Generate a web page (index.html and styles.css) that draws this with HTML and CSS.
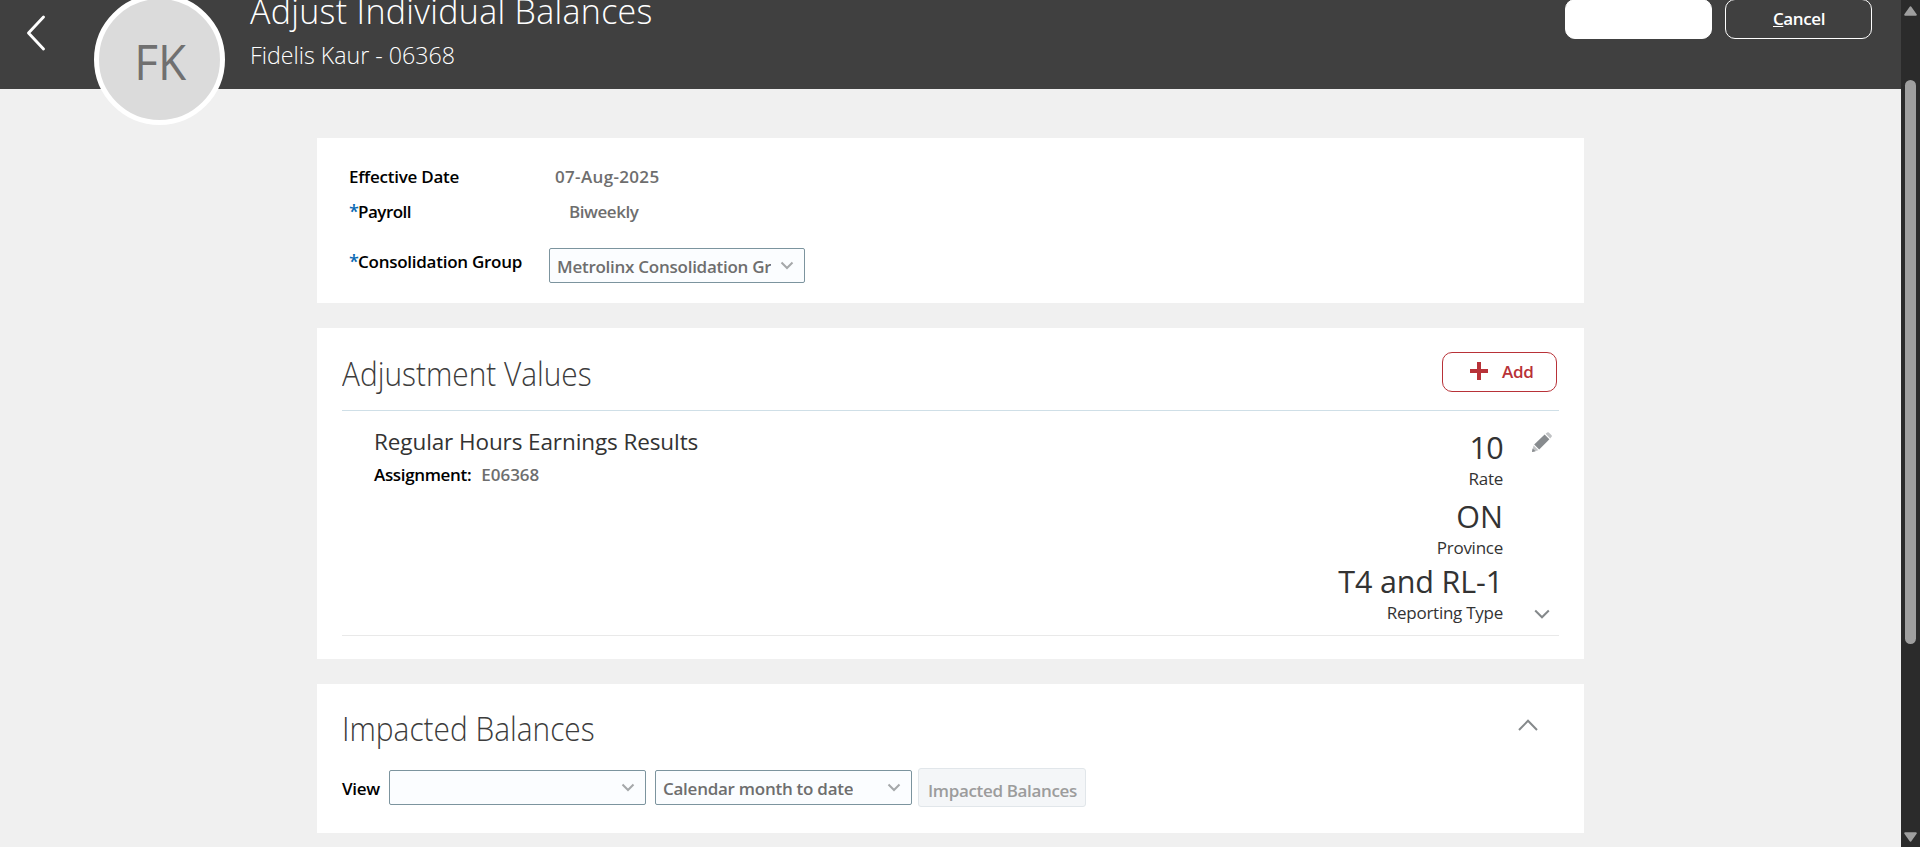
FILE: index.html
```html
<!DOCTYPE html>
<html lang="en">
<head>
<meta charset="utf-8">
<title>Adjust Individual Balances</title>
<link rel="stylesheet" href="styles.css">
</head>
<body>
<div class="page">
  <main class="content">
    <header class="header">
      <svg class="back" width="20" height="38" viewBox="0 0 20 38"><path d="M17.5 3 L2.5 19 L17.5 35"/></svg>
      <div class="avatar"><span class="initials">FK</span></div>
      <div class="heading">
        <h1 class="title">Adjust Individual Balances</h1>
        <p class="subtitle">Fidelis Kaur - 06368</p>
      </div>
      <div class="actions">
        <button class="action action-primary"></button>
        <button class="action"><span><u>C</u>ancel</span></button>
      </div>
    </header>

    <section class="card details">
      <div class="row row-date"><span class="label"><b>Effective Date</b></span><span class="value v-date"><b>07-Aug-2025</b></span></div>
      <div class="row row-payroll"><span class="label"><i class="req">*</i><b class="t-payroll">Payroll</b></span><span class="value v-payroll"><b>Biweekly</b></span></div>
      <div class="row"><span class="label"><i class="req">*</i><b>Consolidation Group</b></span>
        <div class="select select-group"><span class="select-text">Metrolinx Consolidation Gr</span><svg class="chev" width="14" height="9" viewBox="0 0 14 9"><path d="M1.5 1.5 L7 7 L12.5 1.5"/></svg></div>
      </div>
    </section>

    <section class="card values">
      <div class="card-head">
        <h2 class="card-title">Adjustment Values</h2>
        <button class="add"><svg width="18" height="18" viewBox="0 0 18 18"><path d="M7 0h4v7h7v4h-7v7h-4v-7h-7v-4h7z"/></svg><span>Add</span></button>
      </div>
      <div class="entry">
        <div class="entry-main">
          <h3 class="entry-title">Regular Hours Earnings Results</h3>
          <p class="entry-sub"><b>Assignment:</b><span class="entry-id">E06368</span></p>
        </div>
        <div class="stats">
          <div class="stat stat-first"><span class="stat-value v-rate">10</span><span class="stat-label">Rate</span></div>
          <div class="stat"><span class="stat-value v-on">ON</span><span class="stat-label">Province</span></div>
          <div class="stat"><span class="stat-value">T4 and RL-1</span><span class="stat-label">Reporting Type</span></div>
        </div>
        <div class="tools">
          <svg width="20" height="20" viewBox="0 0 20 20"><path class="pen" d="M2.2 12.6 L12.6 2.4 L17.4 7.2 L7.2 17.5 Z"/><path class="pen-end" d="M13.6 1.8 L15.2 0.5 Q16 0 16.8 .5 L19.6 3.2 Q20.2 4 19.6 4.8 L18.2 6.4 Z M1.6 13.4 L6.4 18.2 L0 20 Z"/><path class="pen" d="M0 20 L.6 16.4 L3.6 19.3 Z"/></svg>
          <svg class="chev-lg" width="16" height="10" viewBox="0 0 16 10"><path d="M1.2 1.5 L8 8.3 L14.8 1.5"/></svg>
        </div>
      </div>
    </section>

    <section class="card impacted">
      <div class="impacted-head">
        <h2 class="card-title">Impacted Balances</h2>
        <svg class="chev-up" width="20" height="12" viewBox="0 0 20 12"><path d="M1 11 L10 1.8 L19 11"/></svg>
      </div>
      <div class="filters">
        <span class="view"><b>View</b></span>
        <div class="select"><span class="select-text"></span><svg class="chev" width="14" height="9" viewBox="0 0 14 9"><path d="M1.5 1.5 L7 7 L12.5 1.5"/></svg></div>
        <div class="select select-period"><span class="select-text">Calendar month to date</span><svg class="chev" width="14" height="9" viewBox="0 0 14 9"><path d="M1.5 1.5 L7 7 L12.5 1.5"/></svg></div>
        <button class="impact-btn">Impacted Balances</button>
      </div>
    </section>
  </main>
  <aside class="scrollbar">
    <svg width="13" height="10" viewBox="0 0 13 10"><path d="M6.5 1.2 L11.8 8.8 H1.2 Z"/></svg>
    <div class="thumb"></div>
    <svg width="13" height="10" viewBox="0 0 13 10"><path d="M6.5 8.8 L11.8 1.2 H1.2 Z"/></svg>
  </aside>
</div>
</body>
</html>
```
FILE: styles.css
```css
* { box-sizing: border-box; margin: 0; padding: 0; }
body { font-family: "Open Sans", "Noto Sans", sans-serif; font-size: 17px; line-height: 24px; letter-spacing: -0.26px; color: #333; overflow: hidden; }
b { font-weight: 600; }
button { font: inherit; letter-spacing: inherit; background: none; border: 0; }
svg { display: block; flex: none; }
span, b, h1, h2, h3, p { white-space: nowrap; }
.page { display: flex; height: 847px; background: #f0f0f0; }
.content { flex: 1; min-width: 0; }

.header { display: flex; height: 89px; background: #404040; color: #fff; padding: 0 29px 0 26px; }
.back { margin-top: 14px; fill: none; stroke: #fff; stroke-width: 2.9; stroke-linecap: round; stroke-linejoin: round; }
.avatar { display: flex; align-items: center; justify-content: center; width: 131px; height: 131px; margin: -6px 0 0 48px; border: 5px solid #fff; border-radius: 50%; background: #dbdbdb; color: #707070; font-size: 50px; letter-spacing: 0; flex: none; }
.initials { transform: scaleX(0.92); padding: 2px 0 0 1px; }
.heading { margin: -12px 0 0 25px; flex: 1; }
.title { font-size: 34px; font-weight: 300; line-height: 46px; letter-spacing: 0.3px; }
.subtitle { width: max-content; font-size: 24px; font-weight: 300; line-height: 34px; letter-spacing: 0; margin-top: 4px; transform: scaleX(0.967); transform-origin: 0 0; }
.actions { display: flex; gap: 13px; margin-top: -1px; }
.action { width: 147px; height: 40px; border: 1px solid #fff; border-radius: 10px; color: #fff; font-weight: 600; letter-spacing: -0.4px; padding-left: 1px; }
.action-primary { background: #fff; }

.card { width: 1267px; margin-left: 317px; background: #fff; }
.details { height: 165px; margin-top: 49px; padding: 27px 0 0 32px; color: #000; }
.row { display: flex; align-items: flex-start; }
.row-date { height: 35px; }
.row-payroll { height: 50px; }
.label { width: 200px; display: flex; }
.t-payroll { letter-spacing: -0.5px; }
.req { width: 9px; color: #0a6ab4; font-size: 18px; line-height: 22px; font-style: normal; font-weight: 600; }
.value { color: #6e6e6e; }
.v-date { margin-left: 6px; letter-spacing: 0.34px; }
.v-payroll { margin-left: 20px; letter-spacing: -0.45px; }
.select { display: flex; align-items: center; justify-content: space-between; width: 257px; height: 35px; border: 1px solid #7c949e; border-radius: 2px; background: #fbfdff; color: #6e6e6e; padding: 0 10px 0 7px; }
.select-group { width: 256px; margin-top: -2px; }
.select-text { overflow: hidden; padding-top: 2px; font-weight: 600; }
.chev { fill: none; stroke: #a5a8aa; stroke-width: 2; }

.values { height: 331px; margin-top: 25px; padding: 0 25px; }
.card-title { width: max-content; font-size: 33px; font-weight: 300; line-height: 40px; letter-spacing: 0; color: #3c3c3c; transform: scaleX(0.904); transform-origin: 0 0; }
.card-head { display: flex; justify-content: space-between; height: 83px; padding: 24px 2px 0 0; border-bottom: 1px solid #cfdfe7; }
.card-head .card-title { padding-top: 2px; }
.add { display: flex; align-items: center; width: 115px; height: 40px; padding-left: 27px; gap: 14px; border: 1px solid #b83238; border-radius: 10px; color: #b83238; font-weight: 600; }
.add svg { fill: #b83238; margin-bottom: 2px; }
.entry { display: flex; height: 225px; border-bottom: 1px solid #e9e9e9; padding-left: 32px; }
.entry-main { flex: 1; padding-top: 16px; }
.entry-title { font-size: 22.5px; font-weight: 400; line-height: 30px; letter-spacing: -0.1px; }
.entry-sub { display: flex; gap: 10px; margin-top: 6px; color: #000; }
.entry-sub b { letter-spacing: -0.34px; }
.entry-id { color: #6e6e6e; font-weight: 600; letter-spacing: 0; }
.stats { padding-top: 18px; }
.stat { display: flex; flex-direction: column; align-items: flex-end; gap: 2px; height: 65px; }
.stat-first { height: 69px; }
.stat-value { font-size: 30.5px; line-height: 36px; letter-spacing: -0.15px; }
.v-rate { letter-spacing: -0.7px; }
.v-on { letter-spacing: 0; }
.tools { display: flex; flex-direction: column; align-items: center; justify-content: space-between; width: 56px; padding: 21px 0 16px 21px; }
.pen { fill: #878b8e; }
.pen-end { fill: #c0c2c4; }
.chev-lg, .chev-up { fill: none; stroke: #85898b; stroke-width: 2; }

.impacted { height: 149px; margin-top: 25px; padding: 25px 46px 0 25px; }
.impacted-head { display: flex; justify-content: space-between; height: 59px; }
.chev-up { margin-top: 10px; }
.filters { display: flex; align-items: center; height: 39px; }
.view { width: 47px; padding-top: 2px; color: #000; }
.select-period { margin: 0 6px 0 9px; }
.impact-btn { width: 168px; height: 39px; padding: 6px 0 0 1px; border: 1px solid #e1e6ea; border-radius: 3px; background: #f4f6f8; color: #9c9c9c; font-weight: 600; letter-spacing: -0.34px; }

.scrollbar { display: flex; flex-direction: column; align-items: center; width: 19px; padding: 6px 0 5px; background: #2b2b2b; }
.scrollbar svg { fill: #9f9f9f; stroke: #9f9f9f; stroke-width: 2; stroke-linejoin: round; }
.thumb { width: 11px; height: 564px; margin: 64px 0 188px; border-radius: 6px; background: #9f9f9f; }
```
